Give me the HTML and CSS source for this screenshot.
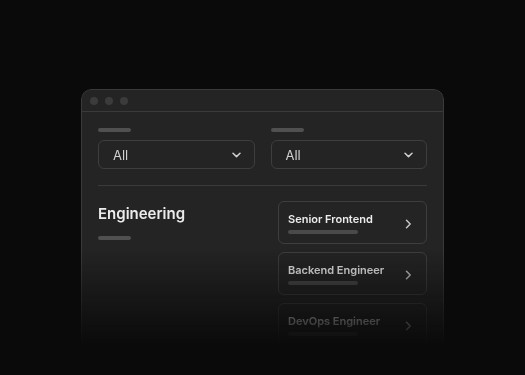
FILE: index.html
```html
<!DOCTYPE html>
<html>
<head>
<meta charset="utf-8">
<link rel="stylesheet" href="styles.css">
</head>
<body>
<div class="stage">
  <div class="window">
    <div class="titlebar">
      <span class="dot"></span><span class="dot"></span><span class="dot"></span>
    </div>
    <div class="content">
      <div class="filters">
        <div class="field">
          <div class="label-bar"></div>
          <div class="select"><span>All</span>
            <svg width="9" height="6" viewBox="0 0 9 6"><path d="M1 1.2 L4.5 4.6 L8 1.2" fill="none" stroke="#cfcfcf" stroke-width="1.5" stroke-linecap="round" stroke-linejoin="round"/></svg>
          </div>
        </div>
        <div class="field">
          <div class="label-bar"></div>
          <div class="select"><span>All</span>
            <svg width="9" height="6" viewBox="0 0 9 6"><path d="M1 1.2 L4.5 4.6 L8 1.2" fill="none" stroke="#cfcfcf" stroke-width="1.5" stroke-linecap="round" stroke-linejoin="round"/></svg>
          </div>
        </div>
      </div>
      <div class="divider"></div>
      <div class="section">
        <div class="dept">
          <h2 class="dept-title">Engineering</h2>
          <div class="dept-bar"></div>
        </div>
        <div class="jobs">
          <div class="job">
            <div class="job-text">
              <div class="job-title">Senior Frontend</div>
              <div class="job-bar"></div>
            </div>
            <svg class="chev" width="7" height="10" viewBox="0 0 7 10"><path d="M1.5 1.2 L5.2 5 L1.5 8.8" fill="none" stroke="#c4c4c4" stroke-width="1.5" stroke-linecap="round" stroke-linejoin="round"/></svg>
          </div>
          <div class="job">
            <div class="job-text">
              <div class="job-title">Backend Engineer</div>
              <div class="job-bar"></div>
            </div>
            <svg class="chev" width="7" height="10" viewBox="0 0 7 10"><path d="M1.5 1.2 L5.2 5 L1.5 8.8" fill="none" stroke="#c4c4c4" stroke-width="1.5" stroke-linecap="round" stroke-linejoin="round"/></svg>
          </div>
          <div class="job">
            <div class="job-text">
              <div class="job-title">DevOps Engineer</div>
              <div class="job-bar"></div>
            </div>
            <svg class="chev" width="7" height="10" viewBox="0 0 7 10"><path d="M1.5 1.2 L5.2 5 L1.5 8.8" fill="none" stroke="#c4c4c4" stroke-width="1.5" stroke-linecap="round" stroke-linejoin="round"/></svg>
          </div>
        </div>
      </div>
    </div>
  </div>
</div>
</body>
</html>
```
FILE: styles.css
```css
html, body {
  margin: 0;
  padding: 0;
  background: #0a0a0a;
  width: 525px;
  height: 375px;
  overflow: hidden;
  font-family: Inter, "Noto Sans", sans-serif;
}
.stage {
  padding: 89px 0 0 81px;
}
.window {
  box-sizing: border-box;
  width: 363px;
  height: 300px;
  background: #242424;
  border: 1px solid #3a3a3a;
  border-radius: 10px;
  overflow: hidden;
  -webkit-mask-image: linear-gradient(to bottom, #000 0, #000 160px, rgba(0,0,0,0) 258px);
  mask-image: linear-gradient(to bottom, #000 0, #000 160px, rgba(0,0,0,0) 258px);
}
.titlebar {
  height: 21px;
  border-bottom: 1px solid #3a3a3a;
  display: flex;
  align-items: center;
  gap: 7px;
  padding-left: 8px;
}
.dot {
  width: 8px;
  height: 8px;
  border-radius: 50%;
  background: #3b3b3b;
}
.content {
  padding: 16px 16px 0 16px;
}
.filters {
  display: grid;
  grid-template-columns: 1fr 1fr;
  gap: 16px;
}
.label-bar {
  width: 33px;
  height: 4px;
  border-radius: 2px;
  background: #505050;
  margin-bottom: 8px;
}
.select {
  box-sizing: border-box;
  height: 29px;
  border: 1px solid #3e3e3e;
  border-radius: 6px;
  display: flex;
  align-items: center;
  justify-content: space-between;
  padding: 0 13px 0 14px;
  color: #d0d0d0;
  font-size: 13px;
}
.select svg { display: block; }
.divider {
  height: 1px;
  background: #3a3a3a;
  margin-top: 16px;
}
.section {
  display: grid;
  grid-template-columns: 1fr 149px;
  gap: 16px;
  padding-top: 15px;
}
.dept-title {
  margin: 3px 0 0;
  font-size: 15px;
  line-height: 20px;
  font-weight: 600;
  color: #ececec;
}
.dept-bar {
  width: 33px;
  height: 4px;
  border-radius: 2px;
  background: #505050;
  margin-top: 12px;
}
.jobs {
  display: flex;
  flex-direction: column;
  gap: 8px;
}
.job {
  box-sizing: border-box;
  height: 43px;
  border: 1px solid #3e3e3e;
  border-radius: 6px;
  display: flex;
  align-items: center;
  justify-content: space-between;
  padding: 0 14px 0 9px;
}
.job-title {
  font-size: 11px;
  line-height: 14px;
  font-weight: 600;
  color: #ececec;
}
.job-bar {
  width: 70px;
  height: 4px;
  border-radius: 2px;
  background: #4a4a4a;
  margin-top: 4px;
}
.chev { display: block; margin-top: 2px; }
```
